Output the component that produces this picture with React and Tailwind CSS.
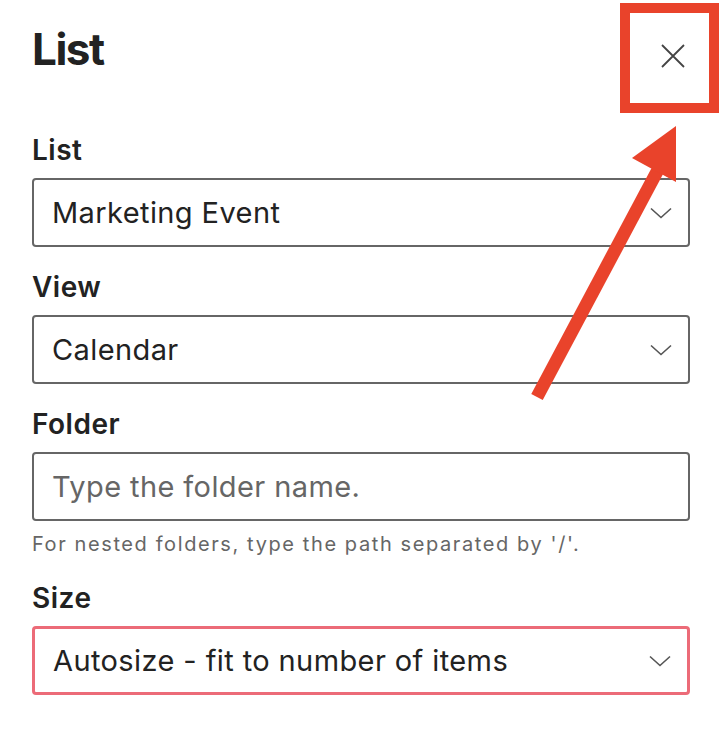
import React from 'react';

const font = { fontFamily: 'Inter, "Noto Sans", sans-serif' };

const Chevron = () => (
    <svg width="22" height="12" viewBox="0 0 22 12" fill="none" className="shrink-0">
        <path d="M1 1.5 L11 10.5 L21 1.5" stroke="#555" strokeWidth="1.6" />
    </svg>
);

const SelectBox = ({ value, highlight }) => (
    <div
        className={
            'flex items-center justify-between h-[69px] rounded-[4px] bg-white pl-[18px] pr-[16px] ' +
            (highlight ? 'border-[3px] border-[#ec6b78]' : 'border-2 border-[#666666]')
        }
    >
        <span className="text-[29px] leading-[36px] tracking-[0.4px] text-[#222]">{value}</span>
        <Chevron />
    </div>
);

const Field = ({ label, children }) => (
    <div className="flex flex-col">
        <label className="text-[28px] leading-[36px] font-semibold tracking-[0.5px] text-[#222] mb-[10px]">{label}</label>
        {children}
    </div>
);

const App = () => {
    return (
        <div className="relative w-[722px] h-[734px] overflow-hidden bg-white" style={font}>
            <div className="flex flex-col px-[32px] pt-[23px]">
                {/* Header */}
                <div className="flex items-start justify-between">
                    <h1 className="text-[44px] leading-[52px] font-bold tracking-[-1.5px] text-[#222]">List</h1>
                    <div className="w-[24px] h-[24px] mt-[21px] mr-[5px]">
                        <svg width="24" height="24" viewBox="0 0 24 24" fill="none">
                            <path d="M1 1 L23 23 M23 1 L1 23" stroke="#444" strokeWidth="1.8" />
                        </svg>
                    </div>
                </div>

                <div className="flex flex-col gap-[22px] mt-[57px]">
                    <Field label="List">
                        <SelectBox value="Marketing Event" />
                    </Field>
                    <Field label="View">
                        <SelectBox value="Calendar" />
                    </Field>
                    <div className="flex flex-col">
                        <Field label="Folder">
                            <div className="flex items-center h-[69px] rounded-[4px] border-2 border-[#666666] pl-[18px]">
                                <span className="text-[29px] leading-[36px] tracking-[0.4px] text-[#666]">Type the folder name.</span>
                            </div>
                        </Field>
                        <p className="mt-[9px] text-[20px] leading-[28px] tracking-[1.6px] text-[#666]">
                            For nested folders, type the path separated by '/'.
                        </p>
                    </div>
                    <Field label="Size">
                        <SelectBox value="Autosize - fit to number of items" highlight />
                    </Field>
                </div>
            </div>

            {/* Annotation: red box + arrow */}
            <div className="absolute left-[620px] top-[3px] w-[99px] h-[110px] border-[10px] border-[#e9432b]" />
            <svg className="absolute left-0 top-0 pointer-events-none" width="722" height="734" viewBox="0 0 722 734">
                <line x1="537" y1="397" x2="660" y2="166" stroke="#e9432b" strokeWidth="13" />
                <polygon points="676,126 632,158 676,182" fill="#e9432b" />
            </svg>
        </div>
    );
};

export default App;
